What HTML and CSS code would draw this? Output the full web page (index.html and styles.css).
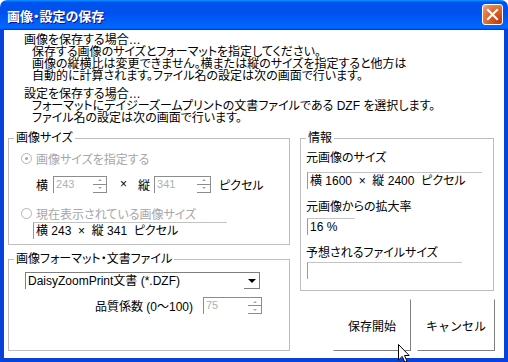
FILE: index.html
```html
<!DOCTYPE html>
<html lang="ja">
  <head>
    <meta charset="UTF-8" />
    <title>画像・設定の保存</title>
    <link rel="stylesheet" href="styles.css">
  </head>
  <body>
    <div class="window">
      <div class="titlebar">
        <span class="title">画像・設定の保存</span>
        <button class="close" title="閉じる">
          <svg width="13" height="13" viewBox="0 0 13 13">
            <path d="M2 2 L11 11 M11 2 L2 11" stroke="#fff" stroke-width="2.2" stroke-linecap="square" />
          </svg>
        </button>
      </div>

      <div class="frame">
        <!-- 説明文 -->
        <div class="intro">
          <p>
            <span class="line">画像を保存する場合…</span>
            <span class="line sub">保存する画像のサイズとフォーマットを指定してください。</span>
            <span class="line sub">画像の縦横比は変更できません。横または縦のサイズを指定すると他方は</span>
            <span class="line sub">自動的に計算されます。ファイル名の設定は次の画面で行います。</span>
          </p>
          <p>
            <span class="line">設定を保存する場合…</span>
            <span class="line sub">フォーマットにデイジーズームプリントの文書ファイルである DZF を選択します。</span>
            <span class="line sub">ファイル名の設定は次の画面で行います。</span>
          </p>
        </div>

        <div class="columns">
          <div class="left">
            <fieldset class="group">
              <legend>画像サイズ</legend>
              <div class="size-body">
                <label class="radio checked"><span class="radio-mark"></span>画像サイズを指定する</label>
                <div class="size-row">
                  <span>横</span>
                  <div class="spin spin-w"><span class="spin-value">243</span><span class="spin-buttons"><i class="up"></i><i class="down"></i></span></div>
                  <span class="times">×</span>
                  <span>縦</span>
                  <div class="spin spin-h"><span class="spin-value">341</span><span class="spin-buttons"><i class="up"></i><i class="down"></i></span></div>
                  <span class="unit">ピクセル</span>
                </div>
                <label class="radio second"><span class="radio-mark"></span>現在表示されている画像サイズ</label>
                <div class="static current-size">横 243 &nbsp;× &nbsp;縦 341 &nbsp;ピクセル</div>
              </div>
            </fieldset>

            <fieldset class="group">
              <legend>画像フォーマット・文書ファイル</legend>
              <div class="format-body">
                <div class="combo">
                  <span class="combo-text">DaisyZoomPrint文書 (*.DZF)</span>
                  <span class="combo-btn"><i class="arrow"></i></span>
                </div>
                <div class="quality-row">
                  <span>品質係数 (0〜100)</span>
                  <div class="spin spin-q"><span class="spin-value">75</span><span class="spin-buttons"><i class="up"></i><i class="down"></i></span></div>
                </div>
              </div>
            </fieldset>
          </div>

          <div class="right">
            <fieldset class="group">
              <legend>情報</legend>
              <div class="info-body">
                <div class="info-label">元画像のサイズ</div>
                <div class="static info-field f-size">横 1600 &nbsp;× &nbsp;縦 2400 &nbsp;ピクセル</div>
                <div class="info-label gap">元画像からの拡大率</div>
                <div class="static info-field f-rate">16 %</div>
                <div class="info-label gap">予想されるファイルサイズ</div>
                <div class="static info-field f-file"></div>
              </div>
            </fieldset>

            <div class="actions">
              <button class="btn">保存開始</button>
              <button class="btn">キャンセル</button>
            </div>
          </div>
        </div>
      </div>

      <!-- マウスカーソル -->
      <svg class="cursor" width="12" height="19" viewBox="0 0 12 19">
        <path d="M0.5 0.5 L0.5 16 L4.2 12.4 L6.8 18.2 L9 17.2 L6.5 11.5 L11.2 11.5 Z" fill="#fff" stroke="#000" stroke-width="1" />
      </svg>
    </div>
  </body>
</html>
```

FILE: styles.css
```css
/* ベース */
body {
  margin: 0;
  background: #ffffff;
  font-family: "Liberation Sans", "Noto Sans CJK JP", sans-serif;
  font-size: 12px;
  font-feature-settings: "palt";
  color: #000000;
}

/* ウィンドウ */
.window {
  position: relative;
  width: 508px;
  height: 362px;
  display: flex;
  flex-direction: column;
}

.titlebar {
  height: 30px;
  flex: none;
  box-sizing: border-box;
  display: flex;
  align-items: center;
  justify-content: space-between;
  padding: 0 5px 0 7px;
  border-radius: 7px 7px 0 0;
  background: linear-gradient(180deg, #0997ff, #0053ee 8%, #0050ee 40%, #0066ff 88%, #0066ff 93%, #005bff 95%, #003dd7 96%, #003dd7);
}

.title {
  color: #ffffff;
  font-weight: bold;
  font-size: 13px;
  text-shadow: 1px 1px #0f1089;
}

.close {
  width: 21px;
  height: 21px;
  padding: 0;
  margin-top: -1px;
  border: 1px solid #ffffff;
  border-radius: 3px;
  background: radial-gradient(circle at 85% 85%, #c13c0f 0, #dc6527 50%, #e58763 80%, #f3b6a0 100%);
  display: flex;
  align-items: center;
  justify-content: center;
}

.frame {
  flex: 1;
  background: #ffffff;
  border: 4px solid #0842dc;
  border-top: 0;
}

/* 説明文 */
.intro {
  padding: 4px 0 0 20px;
  line-height: 12px;
}

.intro p {
  margin: 0 0 6px;
}

.intro p:last-child {
  margin-bottom: 0;
}

.line {
  display: block;
  white-space: nowrap;
}

.sub {
  padding-left: 8px;
}

/* 2カラム */
.columns {
  display: grid;
  grid-template-columns: 282px 194px;
  column-gap: 10px;
  margin-top: 7px;
  padding-left: 4px;
}

.left {
  display: flex;
  flex-direction: column;
  gap: 7px;
}

/* グループボックス */
.group {
  margin: 0;
  padding: 0;
  min-width: 0;
  border: 1px solid #bdbdbd;
}

.group legend {
  margin-left: 5px;
  padding: 0 2px;
  line-height: 14px;
}

/* 画像サイズ */
.size-body {
  padding: 5px 0 5px 12px;
}

.radio {
  display: flex;
  align-items: center;
  gap: 4px;
  height: 16px;
  color: #a7a6aa;
}

.radio.second {
  margin-top: 12px;
}

.radio-mark {
  width: 9px;
  height: 9px;
  border: 1px solid #b4b4b4;
  border-radius: 50%;
  display: flex;
  align-items: center;
  justify-content: center;
}

.radio.checked .radio-mark::after {
  content: "";
  width: 3px;
  height: 3px;
  border-radius: 50%;
  background: #a7a6aa;
}

.size-row {
  display: flex;
  align-items: center;
  height: 18px;
  margin: 9px 0 0 15px;
}

.times {
  margin: 0 11px 0 13px;
}

.unit {
  margin-left: 8px;
}

/* スピンボックス */
.spin {
  display: flex;
  height: 17px;
  box-sizing: border-box;
  border-top: 1px solid #8c8c8c;
  border-left: 1px solid #8c8c8c;
  color: #b0b0b0;
}

.spin-w {
  width: 54px;
  margin-left: 5px;
}

.spin-h {
  width: 57px;
  margin-left: 4px;
}

.spin-q {
  width: 59px;
  margin-left: 10px;
}

.spin-value {
  flex: 1;
  padding-left: 2px;
  line-height: 15px;
  font-size: 11px;
}

.spin-buttons {
  width: 13px;
  display: flex;
  flex-direction: column;
  border-right: 1px solid #8c8c8c;
  border-bottom: 1px solid #8c8c8c;
}

.spin-buttons i {
  flex: 1;
  display: flex;
  align-items: center;
  justify-content: center;
}

.spin-buttons .up {
  border-bottom: 1px solid #8c8c8c;
}

.spin-buttons i::after {
  content: "";
  border-left: 2px solid transparent;
  border-right: 2px solid transparent;
}

.spin-buttons .up::after {
  border-bottom: 2px solid #a7a6aa;
}

.spin-buttons .down::after {
  border-top: 2px solid #a7a6aa;
}

/* 読み取り専用の欄 */
.static {
  box-sizing: border-box;
  height: 17px;
  border-top: 1px solid #c4c4c4;
  border-left: 1px solid #9a9a9a;
  padding-left: 2px;
  line-height: 16px;
  white-space: nowrap;
}

.current-size {
  width: 194px;
  margin: 1px 0 0 12px;
}

/* 画像フォーマット */
.format-body {
  padding: 6px 0 36px 16px;
}

.combo {
  display: flex;
  width: 235px;
  height: 17px;
  box-sizing: border-box;
  border-top: 1px solid #7f7f7f;
  border-left: 1px solid #7f7f7f;
}

.combo-text {
  flex: 1;
  padding-left: 2px;
  line-height: 16px;
}

.combo-btn {
  width: 15px;
  border-right: 1px solid #7f7f7f;
  border-bottom: 1px solid #7f7f7f;
  display: flex;
  align-items: center;
  justify-content: center;
}

.arrow {
  border-left: 4px solid transparent;
  border-right: 4px solid transparent;
  border-top: 4px solid #000000;
}

.quality-row {
  display: flex;
  align-items: center;
  justify-content: flex-end;
  width: 237px;
  margin-top: 8px;
}

/* 情報 */
.info-body {
  padding: 5px 0 11px 5px;
}

.info-label {
  height: 16px;
  line-height: 16px;
}

.info-label.gap {
  margin-top: 10px;
}

.info-field {
  margin: 6px 0 0 1px;
}

.f-size {
  width: 175px;
}

.f-rate {
  width: 48px;
  margin-top: 3px;
}

.f-file {
  width: 155px;
  margin-top: 1px;
}

/* ボタン */
.actions {
  display: flex;
  justify-content: flex-end;
  gap: 6px;
  margin: 8px -1px 0 0;
}

.btn {
  width: 78px;
  height: 52px;
  padding: 0;
  background: #ffffff;
  border: 1px solid;
  border-color: #ffffff #808080 #808080 #ffffff;
  font-family: inherit;
  font-size: 12px;
  color: #000000;
}

/* カーソル */
.cursor {
  position: absolute;
  left: 398px;
  top: 344px;
}
```
